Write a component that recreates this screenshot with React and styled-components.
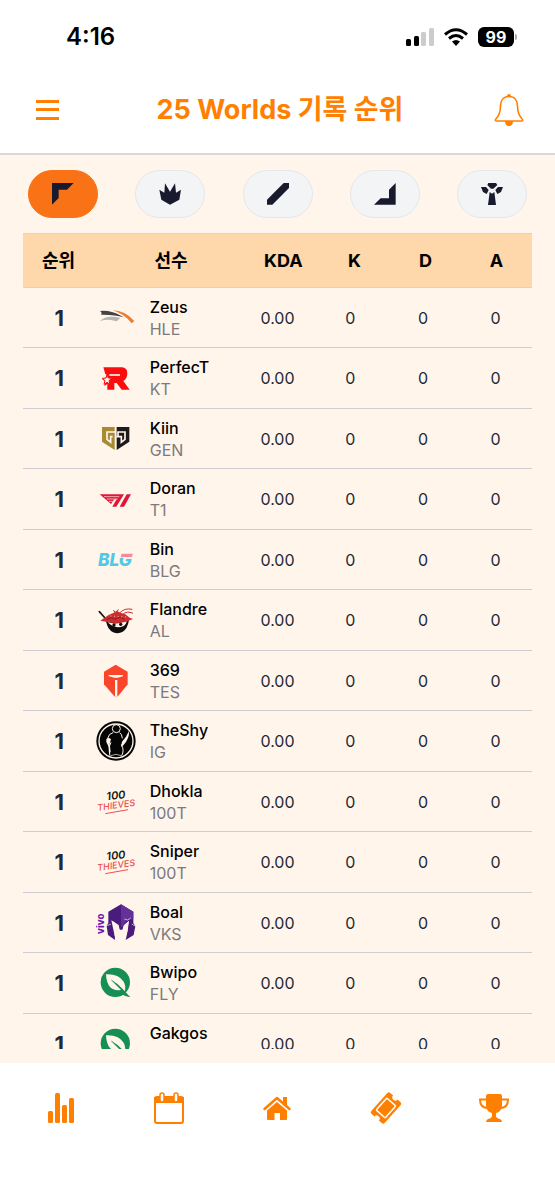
import { useState } from "react";
import styled, { createGlobalStyle } from "styled-components";

const GlobalStyle = createGlobalStyle`
  * {
    box-sizing: border-box;
  }
  body {
    margin: 0;
    background: #fff;
    font-family: Inter, "Noto Sans CJK KR", sans-serif;
    color: #000;
  }
  button {
    padding: 0;
    border: none;
    background: none;
    font: inherit;
    cursor: pointer;
  }
  svg {
    display: block;
  }
`;

const Screen = styled.div`
  display: flex;
  flex-direction: column;
  height: 100vh;
  overflow: hidden;
`;

const StatusBar = styled.div`
  display: flex;
  align-items: center;
  justify-content: space-between;
  padding: 22px 41px 0 66px;
  font-size: 24px;
  line-height: 30px;
  font-weight: 600;
`;

const StatusIcons = styled.div`
  display: flex;
  align-items: center;
  gap: 10px;
`;

const Battery = styled.span`
  position: relative;
  width: 36px;
  height: 20px;
  border-radius: 6px;
  background: #000;
  color: #fff;
  font-size: 16px;
  line-height: 20px;
  font-weight: 700;
  text-align: center;

  &::after {
    content: "";
    position: absolute;
    right: -3px;
    top: 7px;
    width: 2px;
    height: 6px;
    border-radius: 0 2px 2px 0;
    background: #aaa;
  }
`;

const Header = styled.header`
  display: flex;
  align-items: center;
  justify-content: space-between;
  height: 103px;
  padding: 15px 31px 0 36px;
  border-bottom: 2px solid #d9d9d9;
  color: #ff8000;

  h1 {
    margin: 0;
    font-size: 27px;
    line-height: 36px;
    font-weight: 700;
  }
`;

const IconButton = styled.button`
  display: flex;
  align-items: center;
  width: 30px;
  height: 40px;
  color: inherit;
`;

const Main = styled.main`
  display: flex;
  flex: 1;
  flex-direction: column;
  min-height: 0;
  padding: 15px 23px 14px;
  background: #fff5eb;
`;

const Tabs = styled.div`
  display: flex;
  justify-content: space-between;
  padding: 0 5px;
  margin-bottom: 15px;
`;

const Tab = styled.button`
  display: flex;
  align-items: center;
  justify-content: center;
  width: 70px;
  height: 48px;

  && {
    border: 1px solid ${({ $active }) => ($active ? "#f97316" : "#e5e7eb")};
    border-radius: 24px;
    background: ${({ $active }) => ($active ? "#f97316" : "#f3f4f6")};
  }
`;

const TableWrapper = styled.div`
  flex: 1;
  min-height: 0;
  overflow: hidden;
`;

const Table = styled.table`
  display: block;
  width: 100%;

  thead,
  tbody {
    display: block;
  }
  th,
  td {
    padding: 0;
    text-align: center;
  }
`;

const HeadRow = styled.tr`
  display: grid;
  grid-template-columns: 6fr 13fr repeat(4, 6fr);
  align-items: center;
  height: 55px;
  border-top: 1px solid #d9d3d0;
  border-bottom: 1px solid #d9d3d0;
  background: #fed7aa;
  font-size: 18px;
  line-height: 24px;

  th {
    font-weight: 700;
  }
`;

const Row = styled.tr`
  display: grid;
  grid-template-columns: 1fr 2fr repeat(4, 1fr);
  align-items: center;
  height: 60px;
  border-bottom: 1px solid #cfcdd2;
  font-size: 16px;
  line-height: 22px;
  color: #1f2937;

  &:nth-child(even) {
    height: 61px;
  }
`;

const Rank = styled.td`
  font-size: 22px;
  font-weight: 700;
`;

const Player = styled.div`
  display: flex;
  align-items: center;
  gap: 14px;
  text-align: left;
`;

const Name = styled.div`
  font-weight: 500;
  color: #000;
`;

const Team = styled.div`
  color: #7a7a80;
`;

const BottomNav = styled.nav`
  display: grid;
  grid-template-columns: repeat(5, 1fr);
  align-items: start;
  height: 137px;
  padding: 25px 7px 0;
  color: #ff8000;
`;

const NavLink = styled.a`
  display: flex;
  align-items: center;
  justify-content: center;
  height: 40px;
  color: inherit;
`;

const POSITIONS = [
  { id: "top", label: "탑", path: "M0 0H65L45 20H20V45L0 65Z" },
  {
    id: "jungle",
    label: "정글",
    path: "M18 1L33 26L48 1L51 29L66 20L61 50L33 65L7 50L1 20L16 29Z",
  },
  { id: "mid", label: "미드", path: "M0 50L50 0H66V15L16 65H0Z" },
  { id: "bottom", label: "원딜", path: "M65 0V65H0L20 46H45V20Z" },
  {
    id: "support",
    label: "서포터",
    path: "M22 0H45L49 6L37 17H30L19 6ZM0 12H15L23 21L17 33L6 27ZM66 12H51L43 21L49 33L60 27ZM26 27L33 32L40 27L45 66H21Z",
  },
];

const PLAYERS = [
  ["Zeus", "HLE"],
  ["PerfecT", "KT"],
  ["Kiin", "GEN"],
  ["Doran", "T1"],
  ["Bin", "BLG"],
  ["Flandre", "AL"],
  ["369", "TES"],
  ["TheShy", "IG"],
  ["Dhokla", "100T"],
  ["Sniper", "100T"],
  ["Boal", "VKS"],
  ["Bwipo", "FLY"],
  ["Gakgos", "FLY"],
];

// every logo sits on a 120 x 120 canvas
const LOGOS = {
  HLE: (
    <>
      <path fill="#424248" d="M12 39Q42 35 72 52L83 58Q55 49 15 50Q20 45 12 39Z" />
      <path fill="#b5b3b3" d="M12 69Q32 49 73 60L62 70Q38 61 12 69Z" />
      <path fill="#f07c32" d="M50 37Q86 37 115 69L107 76Q84 47 50 37Z" />
    </>
  ),
  KT: (
    <>
      <path
        fill="#fb0d0d"
        d="M22 28H79Q95 30 94 48Q93 62 82 69L101 95H77L62 75H55V95H34V78L25 84L28 71L18 63L29 60L32 49H28Z"
      />
      <path stroke="#fff5eb" strokeWidth="5" d="M40 51H72" />
      <path
        fill="#fff5eb"
        stroke="#fb0d0d"
        strokeWidth="3"
        d="M33 50L37 60L48 61L39 68L42 79L33 73L24 79L27 68L19 61L30 60Z"
      />
    </>
  ),
  GEN: (
    <>
      <path fill="#a78b32" d="M18 24H56V93L18 68Z" />
      <path fill="#1c1a1d" d="M62 24H100V68L62 93Z" />
      <path
        fill="none"
        stroke="#fff5eb"
        strokeWidth="5"
        d="M57 39H33V61L44 70V53H50M66 50V39H87V61L76 70V53H61"
      />
    </>
  ),
  T1: (
    <>
      <path fill="#df1638" d="M11 46H84L61 83H49L62 60L55 61L45 75Z" />
      <path fill="#df1638" d="M92 46H105L84 83H71Z" />
      <path stroke="#fff5eb" strokeWidth="2" fill="none" d="M24 53H70M32 60H65M39 67H58" />
    </>
  ),
  BLG: (
    <>
      <text x="6" y="79" fontSize="52" fontWeight="800" fontStyle="italic" fill="#4fc9e8">
        BLG
      </text>
      <path fill="#fff5eb" d="M73 38H118V53H70Z" />
      <path fill="#f98a9b" d="M77 41H111L107 51H74Z" />
    </>
  ),
  AL: (
    <>
      <path stroke="#181414" strokeWidth="5" strokeLinecap="round" d="M10 35L27 54" />
      <path fill="#100e0e" d="M29 58Q35 99 65 100Q96 97 99 55Z" />
      <path fill="#fff5eb" d="M35 66Q64 77 93 60Q91 78 74 81Q49 84 35 66Z" />
      <circle cx="54" cy="75" r="5" fill="#100e0e" />
      <circle cx="74" cy="73" r="5" fill="#100e0e" />
      <path fill="#cb2d31" d="M13 62L30 50L39 44L52 39L62 32L73 38L88 43L101 53L111 57L91 65Q60 72 34 66Z" />
      <path
        fill="none"
        stroke="#cb2d31"
        strokeWidth="3"
        d="M71 39Q85 23 109 28M80 44Q92 31 111 40M58 38L52 30M64 34L67 28"
      />
      <path stroke="#8a1c20" strokeWidth="3" fill="none" d="M32 59L45 53L56 58L72 51L86 59" />
      <path stroke="#fff5eb" strokeWidth="2" strokeDasharray="3 8" d="M43 48L91 51" />
    </>
  ),
  TES: (
    <>
      <path fill="#fb452b" d="M59 11L95 32V70L66 106H55L24 70V32Z" />
      <path fill="#fff5eb" d="M38 42H81V46L65 50H56L38 46ZM57 57H64V106H57Z" />
    </>
  ),
  IG: (
    <>
      <circle cx="60" cy="60" r="59" fill="#050505" />
      <circle cx="60" cy="60" r="51" fill="none" stroke="#fff5eb" strokeWidth="4" />
      <circle cx="61" cy="23" r="12" fill="none" stroke="#fff5eb" strokeWidth="3" />
      <path
        fill="none"
        stroke="#fff5eb"
        strokeWidth="3"
        d="M51 35Q38 38 35 52M71 35Q78 39 79 52M45 64Q36 80 42 104M76 70Q86 88 77 104"
      />
      <path fill="#fff5eb" d="M31 54Q38 48 45 55L41 68L44 92L39 101Q40 80 35 71Q29 62 31 54Z" />
      <path fill="#fff5eb" d="M99 30Q101 52 82 73L75 78L78 62Q91 49 99 30Z" />
      <path stroke="#fff5eb" strokeWidth="2" fill="none" d="M44 104Q60 96 76 104" />
    </>
  ),
  "100T": (
    <>
      <g transform="rotate(-6 60 60)">
        <text x="33" y="52" fontSize="33" fontWeight="600" fontStyle="italic" fill="#161616">
          100
        </text>
      </g>
      <g transform="rotate(-8 60 60)">
        <text x="2" y="79" fontSize="27" fontWeight="500" fontStyle="italic" fill="#ec4f51">
          THIEVES
        </text>
      </g>
      <path fill="none" stroke="#ec4f51" strokeWidth="3" d="M28 95L96 83" />
    </>
  ),
  VKS: (
    <>
      <g transform="rotate(-90 24 93)">
        <text x="24" y="93" fontSize="29" fontWeight="800" fill="#7117ae">
          vivo
        </text>
      </g>
      <path
        fill="#4a1b7b"
        d="M75 4L112 26V60L118 70L113 96L89 111L93 94L96 68L98 55L83 68L79 82H71L66 68L51 55L55 75L57 111L36 96L32 70L37 59V26Z"
      />
      <path fill="#64319a" d="M75 4L112 26V47L91 53L78 72H75Z" />
      <path stroke="#fff5eb" strokeWidth="2" fill="none" d="M34 68L45 63M107 63L117 69M85 48L95 51L104 45" />
      <path fill="#fff5eb" d="M46 52L68 66L71 80H80L84 66L99 53L95 83L86 109H62L56 98Z" />
    </>
  ),
  FLY: (
    <>
      <circle cx="58" cy="58" r="44" fill="#169052" />
      <path fill="#169052" d="M66 80L80 78L103 103L88 99L74 92Z" />
      <path fill="#fff5eb" d="M30 34Q67 32 82 55Q90 66 87 85L80 78Q65 61 46 51Q62 68 75 81Q50 84 39 68Q31 55 30 34Z" />
      <path stroke="#169052" strokeWidth="2" d="M46 51L81 82" />
    </>
  ),
};

const TeamLogo = ({ team }) => (
  <svg width="40" height="40" viewBox="0 0 120 120" role="img" aria-label={team}>
    {LOGOS[team]}
  </svg>
);

const NAV_ITEMS = [
  {
    label: "통계",
    icon: (
      <g fill="currentColor">
        <rect x="7" y="23" width="5" height="12" rx="1.5" />
        <rect x="14" y="5" width="5" height="30" rx="1.5" />
        <rect x="21" y="17" width="5" height="18" rx="1.5" />
        <rect x="28" y="10" width="5" height="25" rx="1.5" />
      </g>
    ),
  },
  {
    label: "일정",
    icon: (
      <>
        <rect x="6" y="9" width="28" height="26" rx="2" fill="none" stroke="currentColor" strokeWidth="2" />
        <path fill="currentColor" d="M5 9H35V15H5Z" />
        <rect x="11" y="5" width="4" height="9" rx="2" fill="#fff" stroke="currentColor" strokeWidth="1.5" />
        <rect x="25" y="5" width="4" height="9" rx="2" fill="#fff" stroke="currentColor" strokeWidth="1.5" />
      </>
    ),
  },
  {
    label: "홈",
    icon: (
      <>
        <path
          fill="none"
          stroke="currentColor"
          strokeWidth="2.5"
          strokeLinecap="round"
          strokeLinejoin="round"
          d="M7.500 21L20 10L32.500 21"
        />
        <path fill="currentColor" d="M26 9H30V18L26 15Z" />
        <path fill="currentColor" d="M20 14L30 22.500V31Q30 32 29 32H23V25H17.500V32H11Q10 32 10 31V22.500Z" />
      </>
    ),
  },
  {
    label: "티켓",
    icon: (
      <g transform="rotate(-48 20 20)">
        <path
          fill="currentColor"
          d="M8 11H32Q34 11 34 13V17Q31 17 31 20T34 23V27Q34 29 32 29H8Q6 29 6 27V23Q9 23 9 20T6 17V13Q6 11 8 11Z"
        />
        <rect x="12" y="14" width="16" height="12" rx="1" fill="none" stroke="#fff" strokeWidth="1.5" />
      </g>
    ),
  },
  {
    label: "우승",
    icon: (
      <>
        <path
          fill="currentColor"
          d="M14 6H26Q28 6 28 8V18Q27 24 22 25V28Q22 30 26 31Q28 32 28 34H12Q12 32 14 31Q18 30 18 28V25Q13 24 12 18V8Q12 6 14 6Z"
        />
        <path
          fill="none"
          stroke="currentColor"
          strokeWidth="2"
          d="M13 11.500H6Q6 20 14 20M27 11.500H34Q34 20 26 20"
        />
      </>
    ),
  },
];

const App = () => {
  const [position, setPosition] = useState("top");

  return (
    <Screen>
      <GlobalStyle />
      <StatusBar>
        <span>4:16</span>
        <StatusIcons>
          <svg width="28" height="18" viewBox="0 0 28 18" aria-hidden="true">
            <rect x="0" y="11" width="5" height="7" rx="1.5" />
            <rect x="8" y="8" width="5" height="10" rx="1.5" />
            <rect x="15" y="4" width="5" height="14" rx="1.5" fill="#ccc" />
            <rect x="23" y="0" width="5" height="18" rx="1.5" fill="#ccc" />
          </svg>
          <svg width="24" height="18" viewBox="0 0 24 18" aria-hidden="true">
            <path
              fill="none"
              stroke="#000"
              strokeWidth="3"
              d="M1 6.500Q12 -3 23 6.500M5 10.500Q12 4.500 19 10.500"
            />
            <path d="M8 13.500Q12 10.500 16 13.500L12 18Z" />
          </svg>
          <Battery>99</Battery>
        </StatusIcons>
      </StatusBar>

      <Header>
        <IconButton aria-label="메뉴">
          <svg width="23" height="21" viewBox="0 0 23 21" fill="currentColor">
            <path d="M0 0H23V3H0ZM0 8H23V11H0ZM0 17H23V20H0Z" />
          </svg>
        </IconButton>
        <h1>25 Worlds 기록 순위</h1>
        <IconButton aria-label="알림">
          <svg width="30" height="32" viewBox="0 0 30 32">
            <path
              fill="none"
              stroke="currentColor"
              strokeWidth="1.600"
              strokeLinejoin="round"
              d="M15 2.500C9 2.500 6.500 7 6.500 12C6.500 19 5 22 1.500 25.500Q1 27 2.500 27H27.500Q29 27 28.500 25.500C25 22 23.500 19 23.500 12C23.500 7 21 2.500 15 2.500Z"
            />
            <path fill="currentColor" d="M13 2Q13 0 15 0T17 2V3H13ZM11 27H19Q19 32 15 32T11 27Z" />
          </svg>
        </IconButton>
      </Header>

      <Main>
        <Tabs>
          {POSITIONS.map(({ id, label, path }) => (
            <Tab
              key={id}
              $active={position === id}
              aria-pressed={position === id}
              aria-label={label}
              onClick={() => setPosition(id)}
            >
              <svg width="22" height="22" viewBox="0 0 66 66" fill="#1a1a2e">
                <path d={path} />
              </svg>
            </Tab>
          ))}
        </Tabs>

        <TableWrapper>
          <Table>
            <thead>
              <HeadRow>
                <th>순위</th>
                <th>선수</th>
                <th>KDA</th>
                <th>K</th>
                <th>D</th>
                <th>A</th>
              </HeadRow>
            </thead>
            <tbody>
              {PLAYERS.map(([name, team]) => (
                <Row key={name}>
                  <Rank>1</Rank>
                  <td>
                    <Player>
                      <TeamLogo team={team} />
                      <div>
                        <Name>{name}</Name>
                        <Team>{team}</Team>
                      </div>
                    </Player>
                  </td>
                  <td>0.00</td>
                  <td>0</td>
                  <td>0</td>
                  <td>0</td>
                </Row>
              ))}
            </tbody>
          </Table>
        </TableWrapper>
      </Main>

      <BottomNav>
        {NAV_ITEMS.map(({ label, icon }) => (
          <NavLink key={label} href="#" aria-label={label}>
            <svg width="40" height="40" viewBox="0 0 40 40">
              {icon}
            </svg>
          </NavLink>
        ))}
      </BottomNav>
    </Screen>
  );
};

export default App;
